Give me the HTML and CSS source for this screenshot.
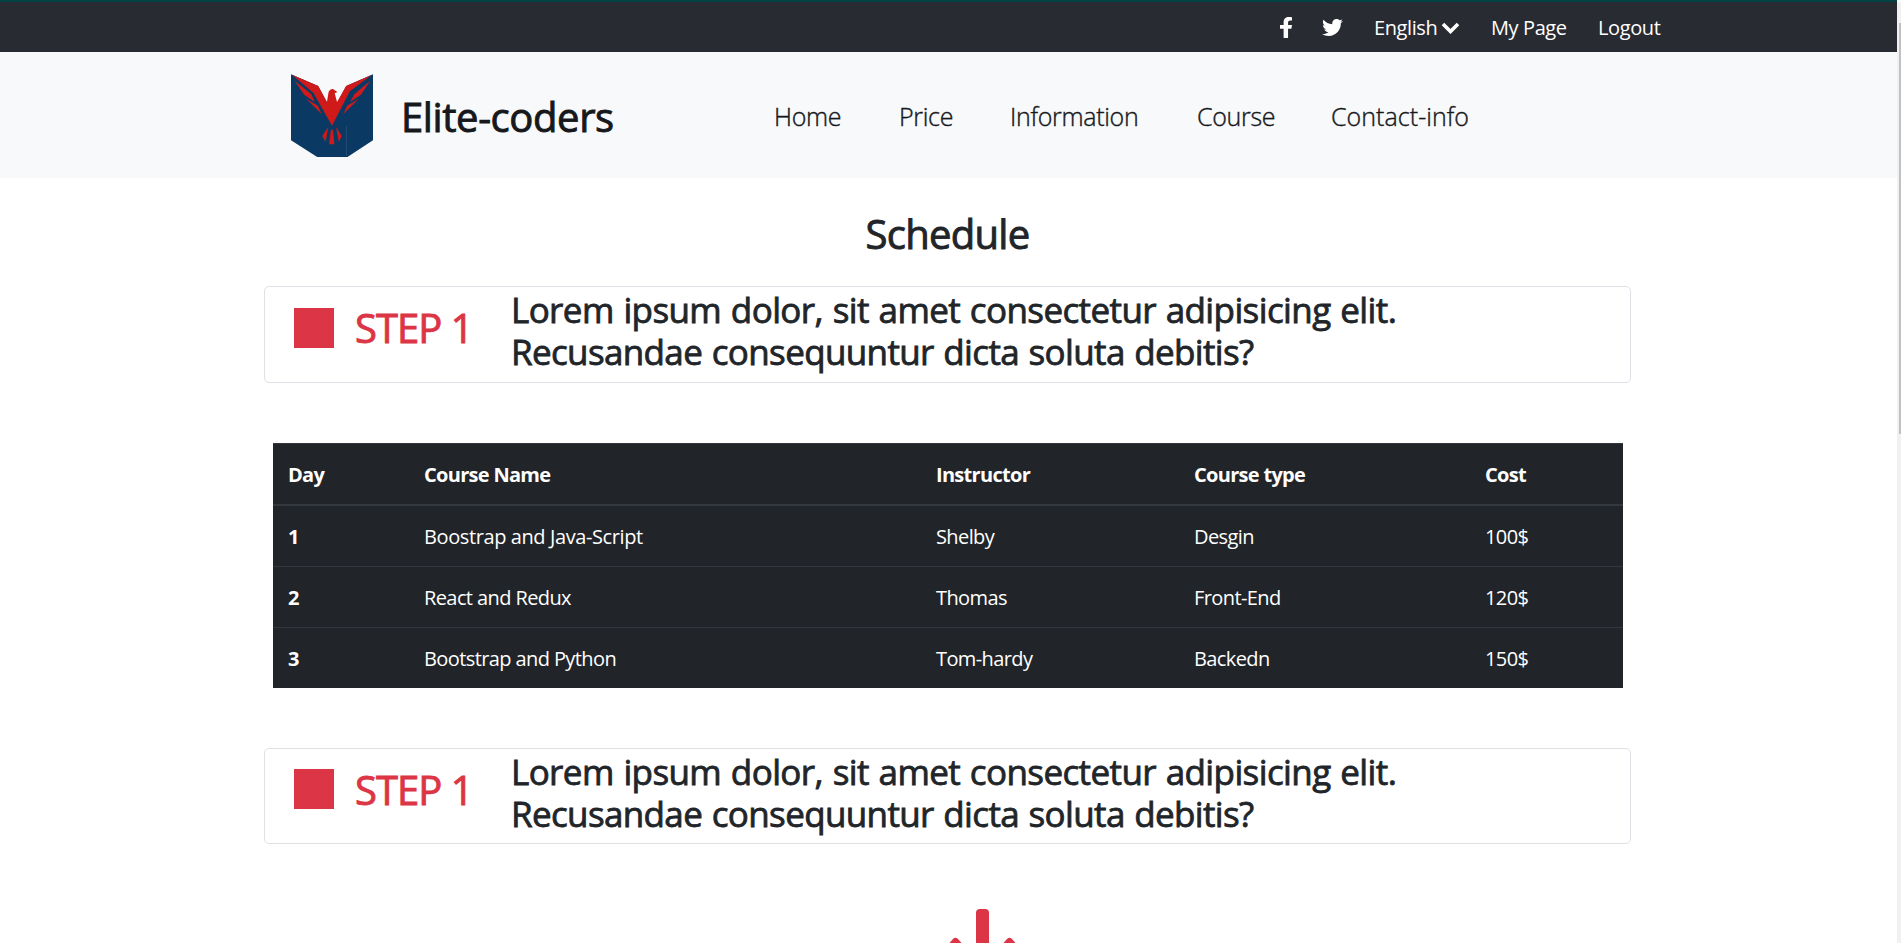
FILE: index.html
```html
<!DOCTYPE html>
<html lang="en">
<head>
<meta charset="utf-8">
<title>Elite-coders</title>
<link rel="stylesheet" href="styles.css">
</head>
<body>
<div class="scrollbar"><div class="scrollbar-thumb"></div></div>
<div class="topbar">
  <svg class="icon-fb" viewBox="22.9 0 270.4 512" preserveAspectRatio="none"><path d="M279.14 288l14.22-92.66h-88.91v-60.13c0-25.35 12.42-50.06 52.24-50.06h40.42V6.26S260.43 0 225.36 0c-73.22 0-121.08 44.38-121.08 124.72v70.62H22.89V288h81.39v224h100.17V288z"/></svg>
  <svg class="icon-tw" viewBox="0 48 512 416"><path d="M459.37 151.716c.325 4.548.325 9.097.325 13.645 0 138.72-105.583 298.558-298.558 298.558-59.452 0-114.68-17.219-161.137-47.106 8.447.974 16.568 1.299 25.34 1.299 49.055 0 94.213-16.568 130.274-44.832-46.132-.975-84.792-31.188-98.112-72.772 6.498.974 12.995 1.624 19.818 1.624 9.421 0 18.843-1.3 27.614-3.573-48.081-9.747-84.143-51.98-84.143-102.985v-1.299c13.969 7.797 30.214 12.67 47.431 13.319-28.264-18.843-46.781-51.005-46.781-87.391 0-19.492 5.197-37.36 14.294-52.954 51.655 63.675 129.3 105.258 216.365 109.807-1.624-7.797-2.599-15.918-2.599-24.04 0-57.828 46.782-104.934 104.934-104.934 30.213 0 57.502 12.67 76.67 33.137 23.715-4.548 46.456-13.32 66.599-25.34-7.798 24.366-24.366 44.833-46.132 57.827 21.117-2.273 41.584-8.122 60.426-16.243-14.292 20.791-32.161 39.308-52.628 54.253z"/></svg>
  <a class="lang">English</a>
  <svg class="icon-down" viewBox="0 0 19 12"><path d="M2 2l7.500 7.500L17 2"/></svg>
  <a class="mypage">My Page</a>
  <a class="logout">Logout</a>
</div>
<header class="header">
  <svg class="logo" viewBox="65 73 244 249" preserveAspectRatio="none">
    <path fill="#0a3a63" d="M65 74L146 109L172 157H204L229 109L309 74V272L233 322H143L65 272z"/>
    <path fill="#f8f9fb" d="M68 73L146 107L172 157L178 124Q184 115 194 120L202 127L194 130L202 157L229 107L306 73z"/>
    <path fill="#d01a1a" d="M68 75L146 109L172 157L177 126Q181 117 190 118L203 127L195 131L202 157L229 109L306 75L240 125L187 228L132 130z"/>
    <path fill="#d01a1a" d="M76 93L125 133L136 157L104 135zM110 147L145 168L156 193zM301 93L254 133L241 157L273 135zM267 147L232 168L221 193zM176 231L158 259L168 276zM184 240H190L194 284H178zM199 231L216 259L207 276z"/>
    <path stroke="#31577a" stroke-width="2" d="M230 228V318"/>
  </svg>
  <span class="brand">Elite-coders</span>
  <nav class="nav">
    <a class="n1">Home</a><a class="n2">Price</a><a class="n3">Information</a><a class="n4">Course</a><a class="n5">Contact-info</a>
  </nav>
</header>
<main class="main">
  <h1 class="title">Schedule</h1>
  <section class="step">
    <div class="square"></div>
    <div class="step-label">STEP 1</div>
    <h3 class="step-text"><span class="l1">Lorem ipsum dolor, sit amet consectetur adipisicing elit.</span> <span class="l2">Recusandae consequuntur dicta soluta debitis?</span></h3>
  </section>
  <table class="table">
    <colgroup><col class="c1"><col class="c2"><col class="c3"><col class="c4"><col class="c5"></colgroup>
    <thead><tr><th>Day</th><th>Course Name</th><th>Instructor</th><th>Course type</th><th>Cost</th></tr></thead>
    <tbody>
      <tr><th>1</th><td class="wide">Boostrap and Java-Script</td><td>Shelby</td><td>Desgin</td><td>100$</td></tr>
      <tr><th>2</th><td>React and Redux</td><td>Thomas</td><td>Front-End</td><td>120$</td></tr>
      <tr><th>3</th><td>Bootstrap and Python</td><td>Tom-hardy</td><td>Backedn</td><td>150$</td></tr>
    </tbody>
  </table>
  <section class="step step-second">
    <div class="square"></div>
    <div class="step-label">STEP 1</div>
    <h3 class="step-text"><span class="l1">Lorem ipsum dolor, sit amet consectetur adipisicing elit.</span> <span class="l2">Recusandae consequuntur dicta soluta debitis?</span></h3>
  </section>
  <svg class="burst" viewBox="0 0 76 34"><rect x="31" y="0" width="13" height="60" rx="4"/><path d="M-8 48L8 30q2.500-2.500 5 0L29 48zM46 48L62 30q2.500-2.500 5 0L83 48z"/></svg>
</main>
</body>
</html>
```
FILE: styles.css
```css
* { box-sizing: border-box; }
html, body { height: 943px; overflow: hidden; }
body {
  margin: 0;
  background: #fff;
  color: #212529;
  font-family: "Open Sans", "Noto Sans", sans-serif;
  font-size: 20px;
  line-height: 30px;
}
.scrollbar {
  position: absolute;
  top: 2px;
  right: 0;
  width: 4px;
  height: 941px;
  background: #f1f1f1;
  padding: 21px 0 0 2px;
}
.scrollbar-thumb { height: 411px; background: #c1c1c1; }
.topbar {
  display: flex;
  align-items: flex-start;
  height: 52px;
  margin-right: 4px;
  padding: 11px 0 0 1280px;
  border-top: 2px solid #024144;
  background: #292b32;
  color: #fff;
  white-space: nowrap;
}
.topbar svg { flex: none; fill: #fff; }
.topbar a { flex: none; letter-spacing: -0.4px; }
.icon-fb { width: 12px; height: 21px; margin: 4px 30px 0 0; }
.icon-tw { width: 21px; height: 17px; margin: 6px 31px 0 0; }
.icon-down { width: 19px; height: 12px; margin: 9px 31px 0 0; }
.topbar .icon-down { fill: none; stroke: #fff; stroke-width: 3.6; }
.lang { width: 67px; }
.mypage { width: 107px; }
.header {
  display: flex;
  height: 126px;
  margin-right: 4px;
  padding: 22px 0 0 291px;
  background: #f8f9fb;
  color: #16181b;
  white-space: nowrap;
}
.logo { flex: none; width: 82px; height: 83px; margin-right: 28px; }
.brand {
  flex: none;
  width: 373px;
  padding-top: 13px;
  font-size: 40px;
  line-height: 60px;
  letter-spacing: -0.4px;
  -webkit-text-stroke: 0.9px currentColor;
}
.nav {
  display: flex;
  padding-top: 23px;
  font-size: 25px;
  font-weight: 300;
  line-height: 38px;
  letter-spacing: -0.3px;
  -webkit-text-stroke: 0.4px currentColor;
}
.n1 { width: 125px; }
.n2 { width: 111px; }
.n3 { width: 187px; }
.n4 { width: 134px; }
.n5 { letter-spacing: 0.05px; }
.main { width: 1367px; margin-left: 264px; }
.title {
  margin: 0;
  padding-top: 31px;
  height: 108px;
  font-size: 40px;
  font-weight: 400;
  line-height: 50px;
  text-align: center;
  letter-spacing: -0.7px;
  -webkit-text-stroke: 0.9px currentColor;
}
.step {
  display: flex;
  height: 97px;
  border: 1px solid #dee2e6;
  border-radius: 5px;
  white-space: nowrap;
}
.square { width: 40px; height: 40px; margin: 21px 21px 0 29px; background: #dc3545; }
.step-label {
  width: 156px;
  padding-top: 17px;
  color: #dc3545;
  font-size: 40px;
  line-height: 48px;
  letter-spacing: -1px;
  -webkit-text-stroke: 0.9px currentColor;
}
.step-text {
  margin: 0;
  padding-top: 2px;
  font-size: 35px;
  font-weight: 400;
  line-height: 42px;
  -webkit-text-stroke: 0.8px currentColor;
}
.l1, .l2 { display: block; }
.l1 { letter-spacing: -0.6px; word-spacing: 1.2px; }
.l2 { letter-spacing: -0.64px; word-spacing: 1.1px; }
.table {
  width: 1350px;
  height: 245px;
  margin: 60px 0 60px 9px;
  table-layout: fixed;
  border-spacing: 0;
  background: #212529;
  color: #fff;
}
.c1 { width: 136px; }
.c2 { width: 512px; }
.c3 { width: 258px; }
.c4 { width: 291px; }
.c5 { width: 153px; }
.table th, .table td {
  height: 61px;
  padding: 16px 15px 14px;
  border-top: 1px solid #32383e;
  text-align: left;
  vertical-align: top;
}
.table thead th { border-bottom: 2px solid #32383e; height: 63px; }
.table tbody tr:first-child > * { height: 60px; border-top: 0; }
.table th { letter-spacing: -0.7px; }
.table td { letter-spacing: -0.6px; }
.table .wide { letter-spacing: -0.4px; }
.step-second { height: 96px; }
.step-second .square { margin-top: 20px; }
.burst { display: block; width: 76px; height: 34px; margin: 65px 0 0 681px; fill: #dc3545; }
```
